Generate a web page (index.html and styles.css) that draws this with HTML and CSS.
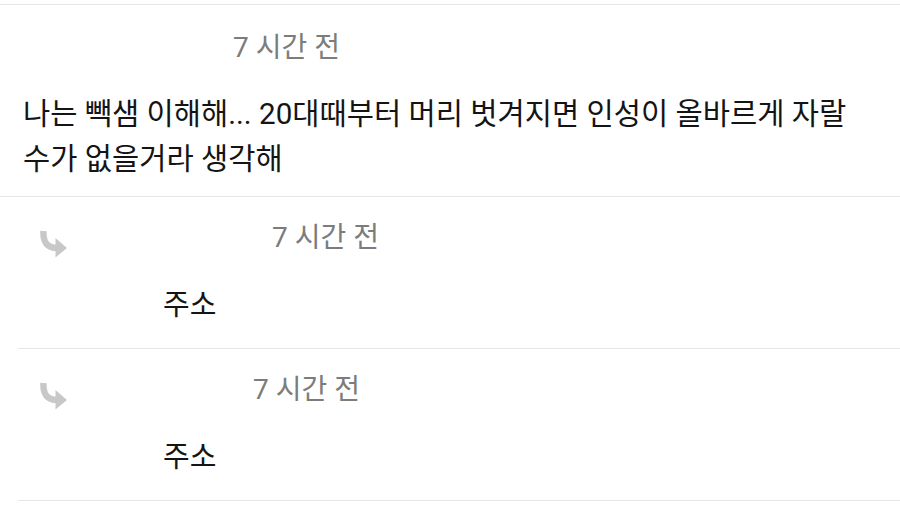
FILE: index.html
```html
<!DOCTYPE html>
<html lang="ko">
<head>
    <meta charset="UTF-8">
    <meta name="viewport" content="width=device-width, initial-scale=1.0">
    <title>댓글</title>
    <link rel="stylesheet" href="styles.css">
</head>
<body>
    <div class="thread">
        <div class="comment">
            <div class="meta">
                <span class="name-gap"></span>
                <span class="time">7 시간 전</span>
            </div>
            <p class="text">나는 빽샘 이해해... 20대때부터 머리 벗겨지면 인성이 올바르게 자랄 수가 없을거라 생각해</p>
        </div>

        <div class="reply">
            <div class="reply-icon">
                <svg width="28" height="28" viewBox="0 0 28 28">
                    <path d="M3.5 1 Q2.5 18 17 18" fill="none" stroke="#c8c8c8" stroke-width="6.5"/>
                    <polygon points="15.5,8 27,18 15.5,27.5" fill="#c8c8c8"/>
                </svg>
            </div>
            <div class="reply-main">
                <div class="meta">
                    <span class="name-gap wide"></span>
                    <span class="time">7 시간 전</span>
                </div>
                <p class="text short">주소</p>
            </div>
        </div>

        <div class="reply">
            <div class="reply-icon">
                <svg width="28" height="28" viewBox="0 0 28 28">
                    <path d="M3.5 1 Q2.5 18 17 18" fill="none" stroke="#c8c8c8" stroke-width="6.5"/>
                    <polygon points="15.5,8 27,18 15.5,27.5" fill="#c8c8c8"/>
                </svg>
            </div>
            <div class="reply-main">
                <div class="meta">
                    <span class="name-gap narrow"></span>
                    <span class="time">7 시간 전</span>
                </div>
                <p class="text short">주소</p>
            </div>
        </div>
    </div>
</body>
</html>
```

FILE: styles.css
```css
:root {
    --text-color: #141414;
    --muted-color: #7c7c7c;
    --border-color: #e6e6e6;
}

body {
    margin: 0;
    background-color: #ffffff;
    font-family: Roboto, "Noto Sans CJK KR", sans-serif;
    color: var(--text-color);
}

.thread {
    padding-top: 4px;
}

.comment {
    border-top: 1px solid var(--border-color);
    border-bottom: 1px solid var(--border-color);
    padding: 28px 40px 14px 23px;
}

.meta {
    display: flex;
    align-items: center;
    height: 30px;
}

.name-gap {
    width: 210px;
}

.name-gap.wide {
    width: 109px;
}

.name-gap.narrow {
    width: 90px;
}

.time {
    font-size: 28px;
    color: var(--muted-color);
    line-height: 30px;
}

.text {
    margin: 29px 0 0;
    font-size: 29.6px;
    line-height: 45px;
    word-break: keep-all;
}

.text.short {
    font-size: 29px;
    line-height: 40px;
    margin-top: 32px;
}

.reply {
    display: flex;
    margin-left: 18px;
    border-bottom: 1px solid var(--border-color);
    padding: 26px 0 23px 22px;
}

.reply-icon {
    width: 123px;
    padding-top: 7px;
}
```
